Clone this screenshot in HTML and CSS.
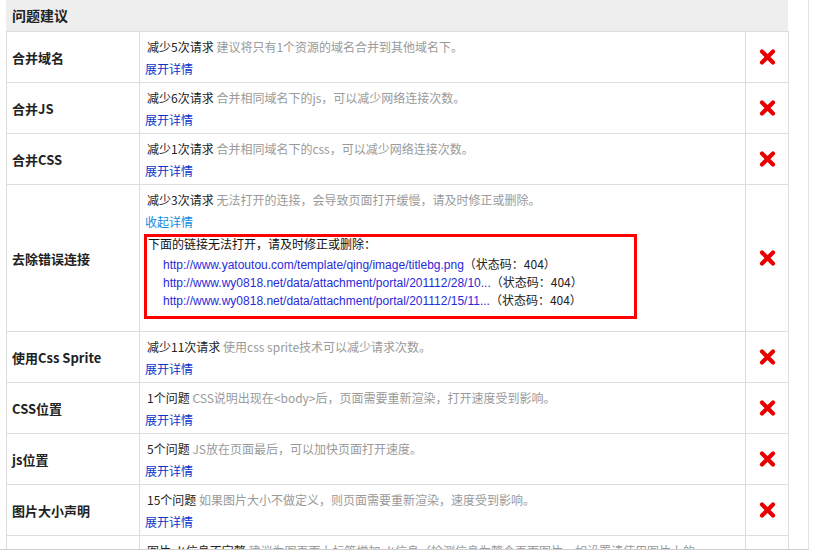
FILE: index.html
```html
<!DOCTYPE html>
<html lang="zh-CN">
<head>
<meta charset="utf-8">
<title>问题建议</title>
<link rel="stylesheet" href="styles.css">
</head>
<body>
<div class="frame">
  <div class="panel">
    <h2 class="panel-title">问题建议</h2>
    <table class="issues">
      <colgroup><col class="c1"><col class="c2"><col class="c3"></colgroup>
      <tr>
        <th>合并域名</th>
        <td class="desc"><div class="line"><span class="count">减少5次请求</span> <span class="note">建议将只有1个资源的域名合并到其他域名下。</span></div><a class="toggle">展开详情</a></td>
        <td class="state"><svg class="x" viewBox="0 0 17 16"><path d="M3 2.5 L14 13.5 M14 2.5 L3 13.5"/></svg></td>
      </tr>
      <tr>
        <th>合并JS</th>
        <td class="desc"><div class="line"><span class="count">减少6次请求</span> <span class="note">合并相同域名下的js，可以减少网络连接次数。</span></div><a class="toggle">展开详情</a></td>
        <td class="state"><svg class="x" viewBox="0 0 17 16"><path d="M3 2.5 L14 13.5 M14 2.5 L3 13.5"/></svg></td>
      </tr>
      <tr>
        <th>合并CSS</th>
        <td class="desc"><div class="line"><span class="count">减少1次请求</span> <span class="note">合并相同域名下的css，可以减少网络连接次数。</span></div><a class="toggle">展开详情</a></td>
        <td class="state"><svg class="x" viewBox="0 0 17 16"><path d="M3 2.5 L14 13.5 M14 2.5 L3 13.5"/></svg></td>
      </tr>
      <tr>
        <th>去除错误连接</th>
        <td class="desc"><div class="line"><span class="count">减少3次请求</span> <span class="note">无法打开的连接，会导致页面打开缓慢，请及时修正或删除。</span></div><a class="toggle open">收起详情</a>
          <div class="detail">
            <div class="detail-title">下面的链接无法打开，请及时修正或删除：</div>
            <ul class="links">
              <li><a class="url">http://www.yatoutou.com/template/qing/image/titlebg.png</a>（状态码：404）</li>
              <li><a class="url">http://www.wy0818.net/data/attachment/portal/201112/28/10...</a>（状态码：404）</li>
              <li><a class="url">http://www.wy0818.net/data/attachment/portal/201112/15/11...</a>（状态码：404）</li>
            </ul>
          </div>
        </td>
        <td class="state"><svg class="x" viewBox="0 0 17 16"><path d="M3 2.5 L14 13.5 M14 2.5 L3 13.5"/></svg></td>
      </tr>
      <tr>
        <th>使用Css Sprite</th>
        <td class="desc"><div class="line"><span class="count">减少11次请求</span> <span class="note">使用css sprite技术可以减少请求次数。</span></div><a class="toggle">展开详情</a></td>
        <td class="state"><svg class="x" viewBox="0 0 17 16"><path d="M3 2.5 L14 13.5 M14 2.5 L3 13.5"/></svg></td>
      </tr>
      <tr>
        <th>CSS位置</th>
        <td class="desc"><div class="line"><span class="count">1个问题</span> <span class="note">CSS说明出现在&lt;body&gt;后，页面需要重新渲染，打开速度受到影响。</span></div><a class="toggle">展开详情</a></td>
        <td class="state"><svg class="x" viewBox="0 0 17 16"><path d="M3 2.5 L14 13.5 M14 2.5 L3 13.5"/></svg></td>
      </tr>
      <tr>
        <th>js位置</th>
        <td class="desc"><div class="line"><span class="count">5个问题</span> <span class="note">JS放在页面最后，可以加快页面打开速度。</span></div><a class="toggle">展开详情</a></td>
        <td class="state"><svg class="x" viewBox="0 0 17 16"><path d="M3 2.5 L14 13.5 M14 2.5 L3 13.5"/></svg></td>
      </tr>
      <tr>
        <th>图片大小声明</th>
        <td class="desc"><div class="line"><span class="count">15个问题</span> <span class="note">如果图片大小不做定义，则页面需要重新渲染，速度受到影响。</span></div><a class="toggle">展开详情</a></td>
        <td class="state"><svg class="x" viewBox="0 0 17 16"><path d="M3 2.5 L14 13.5 M14 2.5 L3 13.5"/></svg></td>
      </tr>
      <tr>
        <th>图片alt信息</th>
        <td class="desc"><div class="line"><span class="count">图片alt信息不完整</span> <span class="note">建议为图页面上标签增加alt信息（检测信息为整个页面图片，如设置请使用图片上的</span></div><a class="toggle">展开详情</a></td>
        <td class="state"><svg class="x" viewBox="0 0 17 16"><path d="M3 2.5 L14 13.5 M14 2.5 L3 13.5"/></svg></td>
      </tr>
    </table>
  </div>
</div>
</body>
</html>
```

FILE: styles.css
```css
html, body {
  margin: 0;
  padding: 0;
  background: #fff;
}

body {
  font-family: "Noto Sans CJK SC", "Liberation Sans", sans-serif;
  font-size: 12px;
  color: #333;
}

.frame {
  width: 808px;
  height: 549px;
  border-right: 1px solid #e2e2e2;
  border-bottom: 1px solid #cfcfcf;
  overflow: hidden;
}

.panel {
  margin-left: 6px;
  width: 782px;
}

.panel-title {
  margin: 0;
  height: 31px;
  line-height: 30px;
  padding-left: 6px;
  background: #eeeeee;
  font-size: 14px;
  font-weight: bold;
  color: #222;
}

.issues {
  width: 782px;
  table-layout: fixed;
  border-collapse: collapse;
}

.c1 { width: 133px; }
.c2 { width: 606px; }
.c3 { width: 43px; }

.issues th,
.issues td {
  border: 1px solid #dddddd;
  padding: 0;
}

.issues th {
  text-align: left;
  vertical-align: middle;
  padding-left: 5px;
  font-size: 13px;
  font-weight: bold;
  color: #222;
}

.issues td.desc {
  vertical-align: top;
  padding: 4px 4px 2px 4px;
  height: 44px;
}

.line {
  line-height: 22px;
  height: 22px;
  white-space: nowrap;
  overflow: hidden;
}

.count {
  margin-left: 3px;
  color: #222;
}

.note {
  color: #9a9a9a;
}

.toggle {
  display: block;
  height: 22px;
  line-height: 22px;
  margin-left: 1px;
  color: #0a35c9;
  cursor: pointer;
}

.toggle.open {
  color: #0d8ce0;
}

.detail {
  margin: 1px 0 10px 0;
  width: 487px;
  border: 3px solid #ff0000;
  padding: 0 0 7px 0;
}

.detail-title {
  height: 14px;
  line-height: 14px;
  padding-left: 1px;
  color: #111;
}

.links {
  list-style: none;
  margin: 4px 0 0 0;
  padding: 0 0 0 16px;
}

.links li {
  height: 18px;
  line-height: 18px;
  color: #222;
  white-space: nowrap;
}

.url {
  font-family: "Liberation Sans", Arial, sans-serif;
  font-size: 12px;
  color: #2a2ad8;
}

.issues td.state {
  text-align: center;
  vertical-align: middle;
}

.x {
  display: block;
  width: 17px;
  height: 16px;
  margin: 0 auto;
}

.x path {
  stroke: #e80000;
  stroke-width: 4.2;
  stroke-linecap: round;
  fill: none;
}
```
